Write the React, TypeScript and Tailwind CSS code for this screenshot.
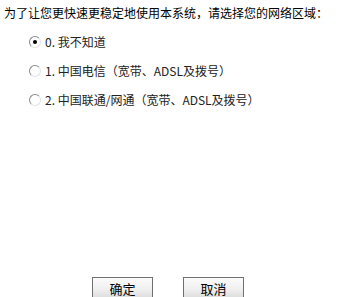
import React from 'react';

const options = [
    { key: 0, label: '0. 我不知道', checked: true },
    { key: 1, label: '1. 中国电信（宽带、ADSL及拨号）', checked: false },
    { key: 2, label: '2. 中国联通/网通（宽带、ADSL及拨号）', checked: false },
];

const Radio: React.FC<{ checked: boolean }> = ({ checked }) => (
    <span className="relative inline-flex w-[12px] h-[12px] shrink-0 rounded-full border border-t-[#8a8a8a] border-l-[#8a8a8a] border-r-[#e4e4e4] border-b-[#e4e4e4] bg-white items-center justify-center">
        {checked && <span className="w-[4px] h-[4px] rounded-full bg-black" />}
    </span>
);

export default function App() {
    return (
        <div
            className="w-[338px] h-[297px] overflow-hidden bg-white text-black flex flex-col"
            style={{ fontFamily: '"Noto Sans CJK SC", "Noto Sans", sans-serif' }}
        >
            {/* 标题 */}
            <p className="pl-[4px] pt-[5px] text-[12px] leading-[16px]">
                为了让您更快速更稳定地使用本系统，请选择您的网络区域：
            </p>
            {/* 选项 */}
            <div className="pl-[29px] pt-[13px] flex flex-col gap-[13px]">
                {options.map((o) => (
                    <label key={o.key} className="flex items-center gap-[4px] h-[16px] text-[12px] leading-[16px] text-[#222]">
                        <Radio checked={o.checked} />
                        <span>{o.label}</span>
                    </label>
                ))}
            </div>
            {/* 按钮 */}
            <div className="mt-auto flex gap-[30px] pl-[92px] mb-[-4px]">
                <button className="w-[61px] h-[24px] border border-[#707070] bg-gradient-to-b from-[#fbfbfb] via-[#f0f0f0] to-[#d8d8d8] text-[13px] leading-[20px]">
                    确定
                </button>
                <button className="w-[61px] h-[24px] border border-[#707070] bg-gradient-to-b from-[#fbfbfb] via-[#f0f0f0] to-[#d8d8d8] text-[13px] leading-[20px]">
                    取消
                </button>
            </div>
        </div>
    );
}
